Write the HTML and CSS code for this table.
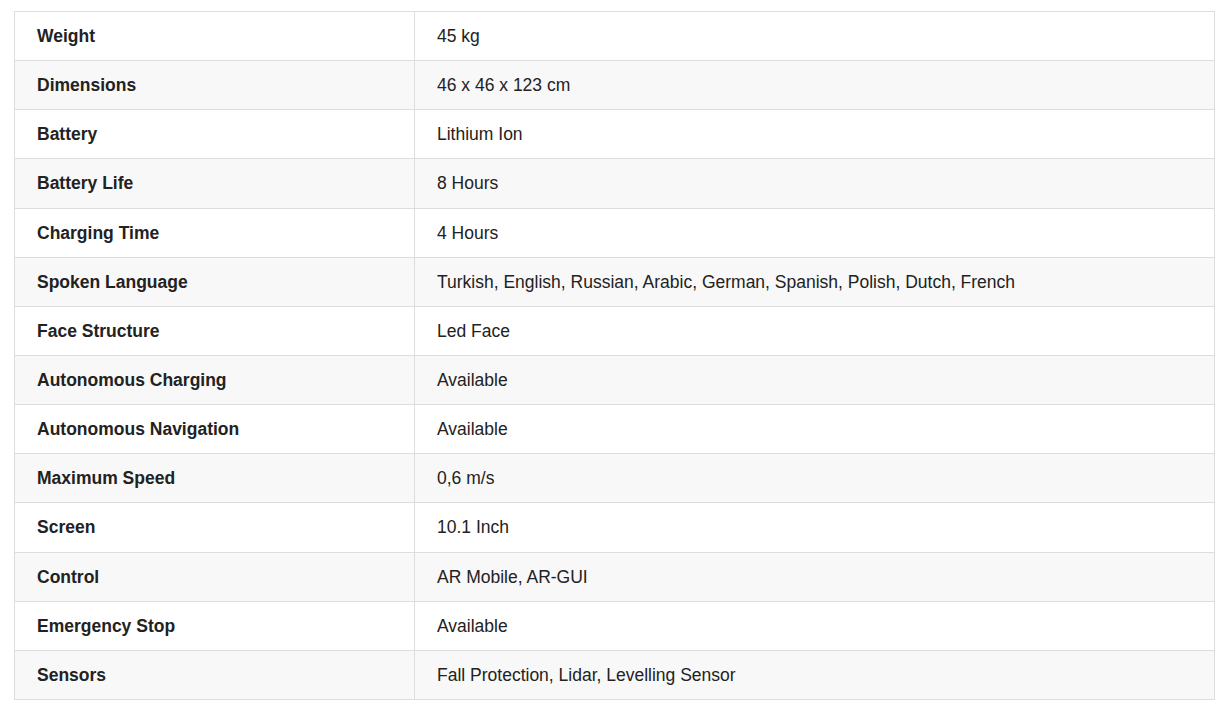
FILE: index.html
```html
<!DOCTYPE html>
<html>
<head>
<meta charset="utf-8">
<link rel="stylesheet" href="styles.css">
</head>
<body>
<div class="wrap">
<table class="specs">
<colgroup><col class="c1"><col class="c2"></colgroup>
<tbody>
<tr><th>Weight</th><td>45 kg</td></tr>
<tr><th>Dimensions</th><td>46 x 46 x 123 cm</td></tr>
<tr><th>Battery</th><td>Lithium Ion</td></tr>
<tr><th>Battery Life</th><td>8 Hours</td></tr>
<tr><th>Charging Time</th><td>4 Hours</td></tr>
<tr><th>Spoken Language</th><td>Turkish, English, Russian, Arabic, German, Spanish, Polish, Dutch, French</td></tr>
<tr><th>Face Structure</th><td>Led Face</td></tr>
<tr><th>Autonomous Charging</th><td>Available</td></tr>
<tr><th>Autonomous Navigation</th><td>Available</td></tr>
<tr><th>Maximum Speed</th><td>0,6 m/s</td></tr>
<tr><th>Screen</th><td>10.1 Inch</td></tr>
<tr><th>Control</th><td>AR Mobile, AR-GUI</td></tr>
<tr><th>Emergency Stop</th><td>Available</td></tr>
<tr><th>Sensors</th><td>Fall Protection, Lidar, Levelling Sensor</td></tr>
</tbody>
</table>
</div>
</body>
</html>
```
FILE: styles.css
```css
html, body {
  margin: 0;
  padding: 0;
  background: #fff;
}
.wrap {
  padding: 11px 9px 0 14px;
}
.specs {
  width: 1201px;
  border-collapse: collapse;
  font-family: "Liberation Sans", Arial, sans-serif;
  font-size: 17.5px;
  color: #222;
  table-layout: fixed;
}
.c1 { width: 400px; }
.specs th, .specs td {
  border: 1px solid #ddd;
  padding: 12px 22px;
  line-height: 24.14px;
  text-align: left;
  vertical-align: middle;
}
.specs th {
  font-weight: bold;
}
.specs tr:nth-child(even) {
  background: #f8f8f8;
}
```
